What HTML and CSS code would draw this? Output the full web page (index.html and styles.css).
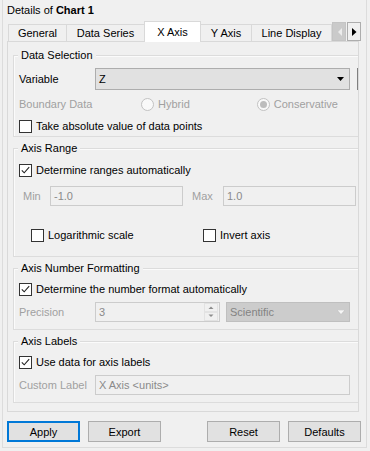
FILE: index.html
```html
<!DOCTYPE html>
<html>
<head>
<meta charset="utf-8">
<title>Details of Chart 1</title>
<link rel="stylesheet" href="styles.css">
</head>
<body>
<div class="dock">
  <div class="title">Details of <b>Chart 1</b></div>

  <div class="tabbar">
    <div class="tab tab-general">General</div>
    <div class="tab tab-series">Data Series</div>
    <div class="tab tab-x selected">X Axis</div>
    <div class="tab tab-y">Y Axis</div>
    <div class="tab tab-line">Line Display</div>
    <div class="scroll-btns">
      <div class="scroll-btn disabled"><svg width="5" height="8" viewBox="0 0 5 8"><polygon points="5,0 5,8 1,4" fill="#ececec"/></svg></div>
      <div class="scroll-btn"><svg width="5" height="8" viewBox="0 0 5 8"><polygon points="0,0 0,8 4.5,4" fill="#000"/></svg></div>
    </div>
  </div>

  <div class="pane">
    <div class="group g1">
      <div class="legend">Data Selection</div>
      <div class="row r1">
        <span class="label">Variable</span>
        <div class="combo combo-var">
          <span class="combo-text">Z</span>
          <svg class="arrow" width="7" height="4" viewBox="0 0 7 4"><polygon points="0,0 7,0 3.5,4" fill="#000"/></svg>
        </div>
        <div class="clip-edge"></div>
      </div>
      <div class="row r2">
        <span class="label dis">Boundary Data</span>
        <span class="radio-item hybrid"><span class="radio"></span><span class="dis">Hybrid</span></span>
        <span class="radio-item cons"><span class="radio checked"><span class="dot"></span></span><span class="dis">Conservative</span></span>
      </div>
      <div class="row r3">
        <span class="cb"></span><span>Take absolute value of data points</span>
      </div>
    </div>

    <div class="group g2">
      <div class="legend">Axis Range</div>
      <div class="row r4">
        <span class="cb checked"><svg width="11" height="11" viewBox="0 0 11 11"><polyline points="1.8,5.3 4.2,7.8 9.2,2.2" fill="none" stroke="#222" stroke-width="1.1"/></svg></span><span>Determine ranges automatically</span>
      </div>
      <div class="row r5">
        <span class="label dis lbl-min">Min</span>
        <div class="input w-range">-1.0</div>
        <span class="label dis lbl-max">Max</span>
        <div class="input w-range">1.0</div>
      </div>
      <div class="row r6">
        <span class="cb-item log"><span class="cb"></span><span>Logarithmic scale</span></span>
        <span class="cb-item"><span class="cb"></span><span>Invert axis</span></span>
      </div>
    </div>

    <div class="group g3">
      <div class="legend">Axis Number Formatting</div>
      <div class="row r7">
        <span class="cb checked"><svg width="11" height="11" viewBox="0 0 11 11"><polyline points="1.8,5.3 4.2,7.8 9.2,2.2" fill="none" stroke="#222" stroke-width="1.1"/></svg></span><span>Determine the number format automatically</span>
      </div>
      <div class="row r8">
        <span class="label dis">Precision</span>
        <div class="input spin">
          <span class="spin-text">3</span>
          <svg class="spin-btns" width="14" height="18" viewBox="0 0 14 18">
            <rect x="0.5" y="0.5" width="13" height="17" fill="none" stroke="#e2e2e2"/>
            <line x1="1" y1="9" x2="13" y2="9" stroke="#d6d6d6"/>
            <polygon points="4.5,6 9.5,6 7,3.5" fill="#8c8c8c"/>
            <polygon points="4.5,11.5 9.5,11.5 7,14" fill="#8c8c8c"/>
          </svg>
        </div>
        <div class="combo combo-dis">
          <span class="combo-text">Scientific</span>
          <svg class="arrow" width="8" height="5" viewBox="0 0 8 5"><polygon points="0,0 8,0 4,4.5" fill="#f6f6f6" stroke="#b8b8b8" stroke-width="0.5"/></svg>
        </div>
      </div>
    </div>

    <div class="group g4">
      <div class="legend">Axis Labels</div>
      <div class="row r9">
        <span class="cb checked"><svg width="11" height="11" viewBox="0 0 11 11"><polyline points="1.8,5.3 4.2,7.8 9.2,2.2" fill="none" stroke="#222" stroke-width="1.1"/></svg></span><span>Use data for axis labels</span>
      </div>
      <div class="row r10">
        <span class="label dis">Custom Label</span>
        <div class="input w-full">X Axis &lt;units&gt;</div>
      </div>
    </div>
  </div>

  <div class="buttons">
    <div class="btn default">Apply</div>
    <div class="btn">Export</div>
    <div class="btn push">Reset</div>
    <div class="btn">Defaults</div>
  </div>
</div>
</body>
</html>
```

FILE: styles.css
```css
* {
  box-sizing: border-box;
}

html,
body {
  margin: 0;
  padding: 0;
}

body {
  width: 370px;
  height: 451px;
  overflow: hidden;
  background: #f0f0f0;
  font-family: "Liberation Sans", Arial, sans-serif;
  font-size: 11px;
  color: #000;
}

.dock {
  width: 365px;
  height: 448px;
  margin-left: 2px;
  border: 1px solid #dcdcdc;
  border-top: none;
  padding: 0 7px 0 4px;
  display: flex;
  flex-direction: column;
}

.title {
  height: 21px;
  line-height: 21px;
  white-space: nowrap;
}

/* tab bar */
.tabbar {
  height: 20px;
  display: flex;
  align-items: flex-end;
  padding-left: 1px;
  margin-right: -2px;
}

.tab {
  height: 17px;
  border: 1px solid #d9d9d9;
  border-bottom: none;
  background: #f0f0f0;
  margin-left: -1px;
  display: flex;
  align-items: center;
  justify-content: center;
  white-space: nowrap;
  flex: none;
}

.tab:first-child {
  margin-left: 0;
}

.tab.selected {
  height: 21px;
  margin-bottom: -1px;
  background: #fff;
  position: relative;
  z-index: 2;
  padding-bottom: 1px;
}

.tab-general { width: 59px; }
.tab-series { width: 79px; }
.tab-x { width: 57px; }
.tab-y { width: 52px; }
.tab-line { width: 81px; }

.scroll-btns {
  margin-left: auto;
  align-self: flex-start;
  margin-top: 1px;
  display: flex;
  gap: 1px;
}

.scroll-btn {
  width: 14px;
  height: 19px;
  display: flex;
  align-items: center;
  justify-content: center;
  border: 1px solid #adadad;
  background: #f0f0f0;
}

.scroll-btn.disabled {
  background: #cacaca;
  border-color: #c4c4c4;
}

/* pane */
.pane {
  border: 1px solid #d9d9d9;
  padding: 13px 0 8px 5px;
  overflow: hidden;
  display: flex;
  flex-direction: column;
}

.group {
  border: 1px solid #dcdcdc;
  box-shadow: inset 1px 1px 0 #fbfbfb;
  margin-right: -20px;
  padding-left: 5px;
  display: flex;
  flex-direction: column;
}

.g2,
.g3,
.g4 {
  margin-top: 11px;
}

.g2 { padding-bottom: 11px; }
.g3,
.g4 { padding-bottom: 7px; }

.legend {
  align-self: flex-start;
  height: 14px;
  line-height: 14px;
  margin: -8px 0 0 -1px;
  padding: 0 3px;
  background: #f0f0f0;
  white-space: nowrap;
}

.row {
  height: 20px;
  display: flex;
  align-items: center;
  white-space: nowrap;
  flex: none;
}

.r1 { height: 22px; margin-top: 6px; }
.r2 { margin-top: 4px; }
.r3 { margin-top: 2px; }
.r4 { margin-top: 5px; }
.r5 { margin-top: 6px; padding-left: 4px; }
.r6 { margin-top: 19px; padding-left: 12px; }
.r7 { margin-top: 4px; }
.r8 { margin-top: 3px; }
.r9 { margin-top: 4px; }
.r10 { margin-top: 3px; }

.label {
  width: 76px;
  flex: none;
}

.dis {
  color: #a0a0a0;
}

.lbl-min {
  width: 27px;
}

.lbl-max {
  width: 31px;
  margin-left: 9px;
}

/* combo boxes */
.combo {
  height: 22px;
  display: flex;
  align-items: center;
  border: 1px solid #adadad;
  background: #e1e1e1;
  padding: 0 5px 0 3px;
  flex: none;
}

.combo-var {
  width: 255px;
}

.combo-text {
  flex: 1;
}

.clip-edge {
  width: 20px;
  height: 22px;
  margin-left: 7px;
  border-left: 1px solid #7f7f7f;
  flex: none;
}

.combo-dis {
  width: 124px;
  height: 20px;
  margin-left: 6px;
  background: #cccccc;
  border-color: #bfbfbf;
  color: #838383;
  padding-right: 4px;
}

/* inputs */
.input {
  height: 20px;
  border: 1px solid #cccccc;
  background: #f0f0f0;
  color: #8a8a8a;
  padding-left: 3px;
  display: flex;
  align-items: center;
  flex: none;
}

.w-range {
  width: 133px;
}

.w-full {
  width: 255px;
}

.spin {
  width: 125px;
  padding-right: 0;
}

.spin-text {
  flex: 1;
}

.spin-btns {
  flex: none;
  margin-right: 1px;
}

/* checkboxes & radios */
.cb {
  width: 13px;
  height: 13px;
  border: 1px solid #333;
  background: #fff;
  margin-right: 4px;
  flex: none;
  display: flex;
}

.cb-item {
  display: flex;
  align-items: center;
}

.cb-item.log {
  width: 172px;
}

.radio-item {
  display: flex;
  align-items: center;
}

.hybrid {
  margin-left: 46px;
}

.cons {
  margin-left: 67px;
}

.radio {
  width: 13px;
  height: 13px;
  border-radius: 50%;
  border: 1px solid #c2c2c2;
  background: #f9f9f9;
  margin-right: 4px;
  display: flex;
  align-items: center;
  justify-content: center;
}

.dot {
  width: 7px;
  height: 7px;
  border-radius: 50%;
  background: #bdbdbd;
}

/* buttons */
.buttons {
  margin-top: 9px;
  margin-right: -2px;
  display: flex;
  gap: 8px;
}

.btn {
  width: 73px;
  height: 21px;
  border: 1px solid #adadad;
  background: #e1e1e1;
  display: flex;
  align-items: center;
  justify-content: center;
}

.btn.default {
  border: 2px solid #0078d7;
}

.btn.push {
  margin-left: auto;
}
```
